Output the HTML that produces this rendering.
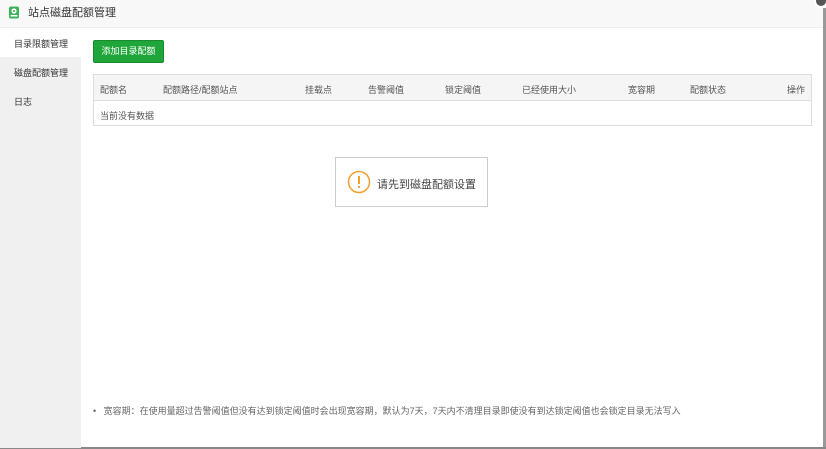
<!DOCTYPE html>
<html><head><meta charset="utf-8"><style>
*{margin:0;padding:0;box-sizing:border-box}
body{width:826px;height:449px;overflow:hidden;background:#fff;font-family:"Liberation Sans","Noto Sans CJK SC",sans-serif;font-size:9px;color:#555;position:relative}
.title{position:absolute;left:0;top:0;width:823px;height:28px;background:#f8f8f8;border-bottom:1px solid #eee;font-size:11px;color:#333;line-height:26px;padding-left:28px}
.side{position:absolute;left:0;top:28px;width:81px;height:420px;background:#f0f0f0}
.side div{height:29px;line-height:32px;padding-left:14px;font-size:9px;color:#333}
.side .on{background:#fff}
.btn{position:absolute;left:93px;top:40px;width:71px;height:23px;background:#20a53a;border:1px solid #1a8a30;border-radius:2px;color:#fff;font-size:9px;line-height:21px;text-align:center}
.tbl{position:absolute;left:93px;top:74px;width:719px;height:52px;border:1px solid #ddd}
.th{height:26px;background:#f5f5f5;border-bottom:1px solid #ddd;position:relative}
.th span,.td span{position:absolute;top:8px;font-size:9px;color:#555}
.td{position:relative;height:25px}
.msg{position:absolute;left:335px;top:157px;width:153px;height:50px;border:1px solid #ccc;background:#fff}
.note{position:absolute;left:93px;top:404px;font-size:9px;color:#666;white-space:nowrap}
</style></head><body>
<div class="title"><svg style="position:absolute;left:8px;top:6px" width="12" height="13" viewBox="0 0 12 13"><rect x="1" y="0.5" width="10" height="12" rx="2" fill="#3cb05a"/><circle cx="6" cy="5" r="2.6" fill="#fff"/><circle cx="6" cy="5" r="1" fill="#3cb05a"/><rect x="2.5" y="9" width="7" height="1.5" fill="#fff"/></svg>站点磁盘配额管理</div>
<div style="position:absolute;left:814px;top:-6px;width:14px;height:14px;border-radius:50%;background:#555;border:2px solid #fff"></div>
<div style="position:absolute;left:823px;top:8px;width:3px;height:441px;background:#999"></div>
<div style="position:absolute;left:0;top:447px;width:826px;height:2px;background:#888"></div>
<div class="side"><div class="on">目录限额管理</div><div>磁盘配额管理</div><div>日志</div></div>
<div class="btn">添加目录配额</div>
<div class="tbl">
<div class="th"><span style="left:6px">配额名</span><span style="left:69px">配额路径/配额站点</span><span style="left:211px">挂载点</span><span style="left:274px">告警阈值</span><span style="left:351px">锁定阈值</span><span style="left:428px">已经使用大小</span><span style="left:534px">宽容期</span><span style="left:596px">配额状态</span><span style="left:693px">操作</span></div>
<div class="td"><span style="left:6px">当前没有数据</span></div>
</div>
<div class="msg"><svg style="position:absolute;left:11px;top:12px" width="24" height="24" viewBox="0 0 24 24"><circle cx="12" cy="12" r="10.5" fill="none" stroke="#f0a030" stroke-width="1.5"/><rect x="11" y="6" width="2" height="8" fill="#f0a030"/><rect x="11" y="16" width="2" height="2" fill="#f0a030"/></svg><span style="position:absolute;left:41px;top:18px;font-size:11px;color:#444">请先到磁盘配额设置</span></div>
<div class="note">•&nbsp;&nbsp; 宽容期：在使用量超过告警阈值但没有达到锁定阈值时会出现宽容期，默认为7天，7天内不清理目录即使没有到达锁定阈值也会锁定目录无法写入</div>
</body></html>
